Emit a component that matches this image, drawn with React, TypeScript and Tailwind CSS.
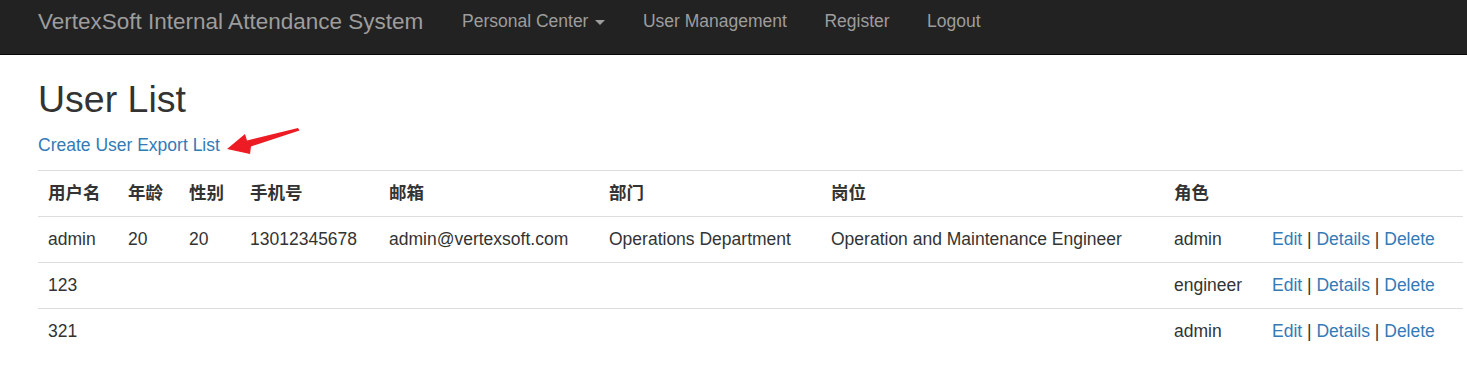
const users = [
  {
    name: "admin",
    age: "20",
    gender: "20",
    phone: "13012345678",
    email: "admin@vertexsoft.com",
    dept: "Operations Department",
    post: "Operation and Maintenance Engineer",
    role: "admin",
  },
  { name: "123", age: "", gender: "", phone: "", email: "", dept: "", post: "", role: "engineer" },
  { name: "321", age: "", gender: "", phone: "", email: "", dept: "", post: "", role: "admin" },
];

const headers = ["用户名", "年龄", "性别", "手机号", "邮箱", "部门", "岗位", "角色", ""];
const widths = ["w-[80px]", "w-[61px]", "w-[61px]", "w-[139px]", "w-[220px]", "w-[222px]", "w-[343px]", "w-[98px]", "w-[201px]"];

export default function App() {
  return (
    <div className="min-h-[369px] bg-white font-['Liberation_Sans','Noto_Sans_CJK_SC',sans-serif] text-[17.5px] leading-[25px] text-[#333]">
      {/* Navbar */}
      <nav className="h-[55px] border-b border-[#080808] bg-[#222]">
        <div className="flex items-start pl-[38px]">
          <a href="#" className="pt-[9px] text-[22.5px] leading-[25px] text-[#9d9d9d]">
            VertexSoft Internal Attendance System
          </a>
          <ul className="ml-[20px] flex">
            <li>
              <a href="#" className="flex items-center px-[18.75px] pt-[9px] leading-[25px] text-[#9d9d9d]">
                Personal Center
                <span className="ml-[7px] mt-[2px] inline-block h-0 w-0 border-x-[5px] border-t-[5px] border-x-transparent border-t-[#9d9d9d]"></span>
              </a>
            </li>
            <li>
              <a href="#" className="block px-[18.75px] pt-[9px] leading-[25px] text-[#9d9d9d]">
                User Management
              </a>
            </li>
            <li>
              <a href="#" className="block px-[18.75px] pt-[9px] leading-[25px] text-[#9d9d9d]">
                Register
              </a>
            </li>
            <li>
              <a href="#" className="block px-[18.75px] pt-[9px] leading-[25px] text-[#9d9d9d]">
                Logout
              </a>
            </li>
          </ul>
        </div>
      </nav>

      {/* Body */}
      <div className="pl-[38px] pr-[4px]">
        <h2 className="mt-[24px] mb-[12.5px] text-[37.5px] leading-[1.1]">User List</h2>
        <p className="relative mb-[12.5px]">
          <a href="#" className="text-[#337ab7]">
            Create User Export List
          </a>
          <svg
            className="absolute left-[186px] top-[-8px]"
            width="80"
            height="32"
            viewBox="0 0 80 32"
          >
            <polygon
              points="3,24 21,9 23,15.5 74,3 75.5,5.5 27,21.5 26,29"
              fill="#ed1c24"
            />
          </svg>
        </p>

        <table className="w-full table-fixed border-collapse">
          <thead>
            <tr>
              {headers.map((h, i) => (
                <th
                  key={i}
                  className={`${widths[i]} border-t border-[#ddd] p-[10px] text-left font-bold`}
                >
                  {h}
                </th>
              ))}
            </tr>
          </thead>
          <tbody>
            {users.map((u, i) => (
              <tr key={i}>
                <td className="border-t border-[#ddd] p-[10px] whitespace-nowrap">{u.name}</td>
                <td className="border-t border-[#ddd] p-[10px] whitespace-nowrap">{u.age}</td>
                <td className="border-t border-[#ddd] p-[10px] whitespace-nowrap">{u.gender}</td>
                <td className="border-t border-[#ddd] p-[10px] whitespace-nowrap">{u.phone}</td>
                <td className="border-t border-[#ddd] p-[10px] whitespace-nowrap">{u.email}</td>
                <td className="border-t border-[#ddd] p-[10px] whitespace-nowrap">{u.dept}</td>
                <td className="border-t border-[#ddd] p-[10px] whitespace-nowrap">{u.post}</td>
                <td className="border-t border-[#ddd] p-[10px] whitespace-nowrap">{u.role}</td>
                <td className="border-t border-[#ddd] p-[10px] whitespace-nowrap">
                  <a href="#" className="text-[#337ab7]">Edit</a> |{" "}
                  <a href="#" className="text-[#337ab7]">Details</a> |{" "}
                  <a href="#" className="text-[#337ab7]">Delete</a>
                </td>
              </tr>
            ))}
          </tbody>
        </table>
      </div>
    </div>
  );
}
